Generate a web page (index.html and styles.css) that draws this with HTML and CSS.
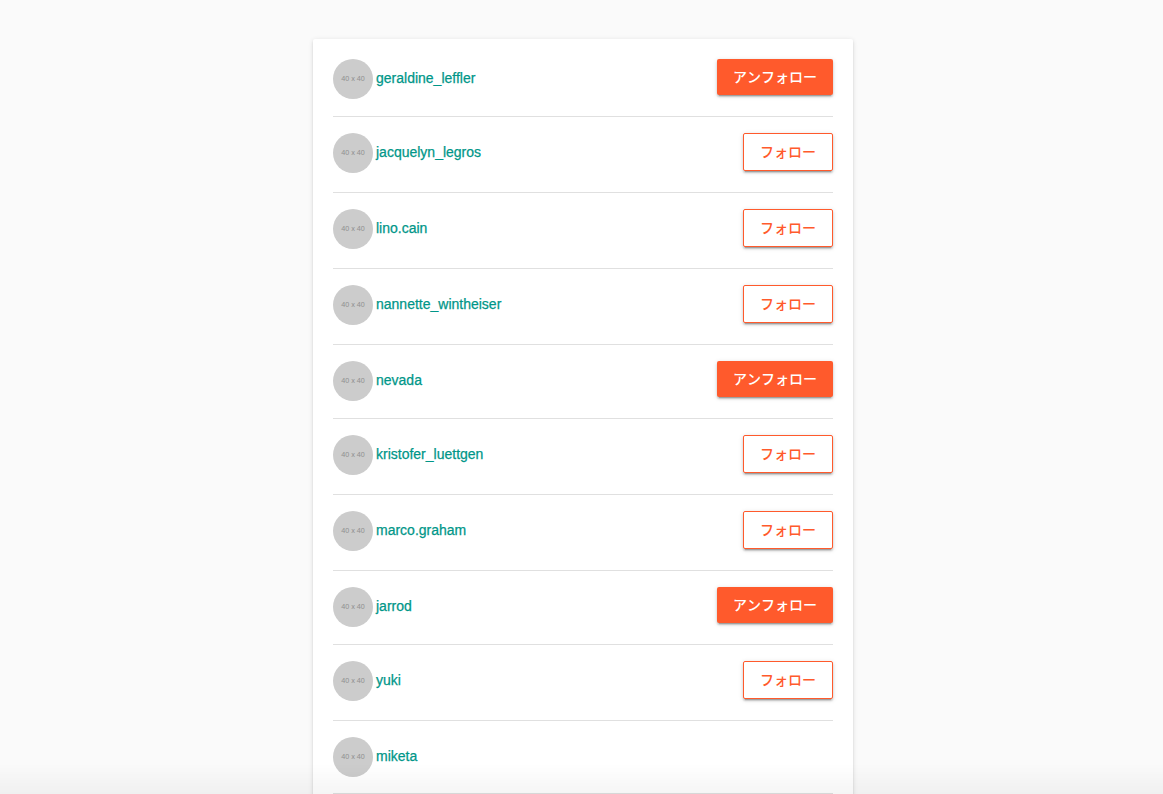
FILE: index.html
```html
<!DOCTYPE html>
<html lang="ja">
<head>
<meta charset="utf-8">
<meta name="viewport" content="width=device-width, initial-scale=1">
<title>ユーザー</title>
<link rel="stylesheet" href="styles.css">
</head>
<body>
<main class="page">
<ul class="card">
<li class="user"><a class="user-link" href="#"><span class="avatar">40 x 40</span><span class="name">geraldine_leffler</span></a><button class="btn btn-filled" type="button">アンフォロー</button></li>
<li class="user"><a class="user-link" href="#"><span class="avatar">40 x 40</span><span class="name">jacquelyn_legros</span></a><button class="btn btn-outline" type="button">フォロー</button></li>
<li class="user"><a class="user-link" href="#"><span class="avatar">40 x 40</span><span class="name">lino.cain</span></a><button class="btn btn-outline" type="button">フォロー</button></li>
<li class="user"><a class="user-link" href="#"><span class="avatar">40 x 40</span><span class="name">nannette_wintheiser</span></a><button class="btn btn-outline" type="button">フォロー</button></li>
<li class="user"><a class="user-link" href="#"><span class="avatar">40 x 40</span><span class="name">nevada</span></a><button class="btn btn-filled" type="button">アンフォロー</button></li>
<li class="user"><a class="user-link" href="#"><span class="avatar">40 x 40</span><span class="name">kristofer_luettgen</span></a><button class="btn btn-outline" type="button">フォロー</button></li>
<li class="user"><a class="user-link" href="#"><span class="avatar">40 x 40</span><span class="name">marco.graham</span></a><button class="btn btn-outline" type="button">フォロー</button></li>
<li class="user"><a class="user-link" href="#"><span class="avatar">40 x 40</span><span class="name">jarrod</span></a><button class="btn btn-filled" type="button">アンフォロー</button></li>
<li class="user"><a class="user-link" href="#"><span class="avatar">40 x 40</span><span class="name">yuki</span></a><button class="btn btn-outline" type="button">フォロー</button></li>
<li class="user"><a class="user-link" href="#"><span class="avatar">40 x 40</span><span class="name">miketa</span></a></li>
</ul>
</main>
<div class="bottom-fade"></div>
</body>
</html>
```

FILE: styles.css
```css
* { box-sizing: border-box; }

html { scrollbar-width: none; }

body {
  margin: 0;
  background: #fafafa;
  font-family: "Liberation Sans", "Noto Sans CJK JP", sans-serif;
}

.page { padding: 39px 0 40px 3px; }

.card {
  max-width: 540px;
  margin: 0 auto;
  padding: 4px 20px 20px;
  list-style: none;
  background: #fff;
  border-radius: 2px;
  box-shadow: 0 2px 2px 0 rgba(0, 0, 0, .1), 0 1px 5px 0 rgba(0, 0, 0, .12);
}

.user {
  display: flex;
  align-items: flex-start;
  justify-content: space-between;
  padding: 16px 0;
  border-bottom: 1px solid #e0e0e0;
}

.user-link {
  display: flex;
  align-items: center;
  gap: 3px;
  color: #009688;
  font-size: 14px;
  line-height: 20px;
  text-decoration: none;
}

.name {
  padding-bottom: 2px;
  -webkit-text-stroke: 0.25px currentColor;
}

.avatar {
  display: flex;
  align-items: center;
  justify-content: center;
  width: 40px;
  height: 40px;
  border-radius: 50%;
  background: #ccc;
  color: #909090;
  font: 7px/10px "Noto Sans", sans-serif;
}

.btn {
  margin: 0 0 5px;
  padding: 0 16px 2px;
  border: 0;
  border-radius: 2px;
  font: 500 14px/34px "Noto Sans CJK JP", sans-serif;
  font-kerning: none;
  box-shadow: 0 2px 2px 0 rgba(0, 0, 0, .16), 0 1px 5px 0 rgba(0, 0, 0, .14), 0 3px 1px -2px rgba(0, 0, 0, .2);
}

.btn-filled {
  background: #ff5a2c;
  color: #fff;
}

.btn-outline {
  border: 1px solid #ff5a2c;
  background: #fff;
  color: #ff5a2c;
}

.bottom-fade {
  position: fixed;
  right: 0;
  bottom: 0;
  left: 0;
  height: 30px;
  background: linear-gradient(transparent, rgba(0, 0, 0, .04));
  pointer-events: none;
}
```
